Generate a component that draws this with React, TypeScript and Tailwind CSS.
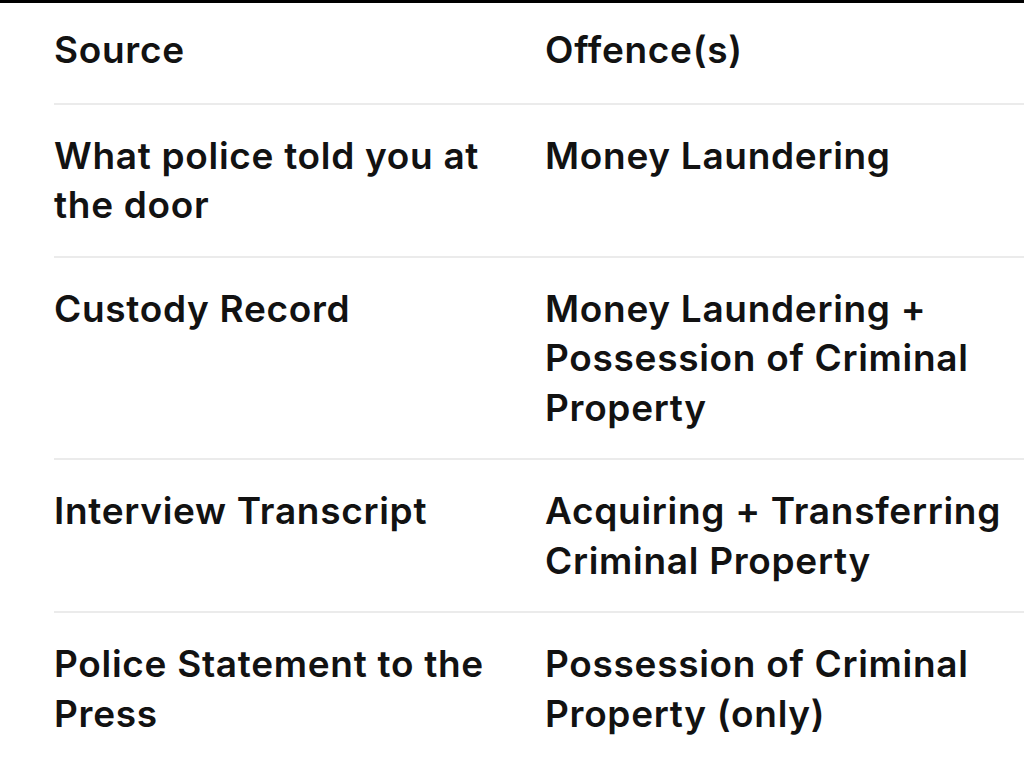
const rows = [
  { source: "What police told you at the door", offence: "Money Laundering" },
  { source: "Custody Record", offence: "Money Laundering + Possession of Criminal Property" },
  { source: "Interview Transcript", offence: "Acquiring + Transferring Criminal Property" },
  { source: "Police Statement to the Press", offence: "Possession of Criminal Property (only)" },
]

const App = () => {
  return (
    <div className="min-h-[777px] w-full bg-white text-[#121212] font-['Inter','Liberation_Sans',sans-serif] font-semibold text-[37px] leading-[49.5px] tracking-[0.7px]">
      <div className="h-[3px] w-full bg-black" />
      <div className="pl-[54px]">
        <div className="flex border-b-2 border-[#ebebeb] pt-[22px] pb-[28px]">
          <div className="w-[491px] shrink-0">Source</div>
          <div className="flex-1 pr-2">Offence(s)</div>
        </div>
        {rows.map((row, i) => (
          <div
            key={row.source}
            className={"flex py-[26px] " + (i < rows.length - 1 ? "border-b-2 border-[#ebebeb]" : "")}
          >
            <div className="w-[491px] shrink-0 pr-8">{row.source}</div>
            <div className="flex-1 pr-2">{row.offence}</div>
          </div>
        ))}
      </div>
    </div>
  )
}

export default App
